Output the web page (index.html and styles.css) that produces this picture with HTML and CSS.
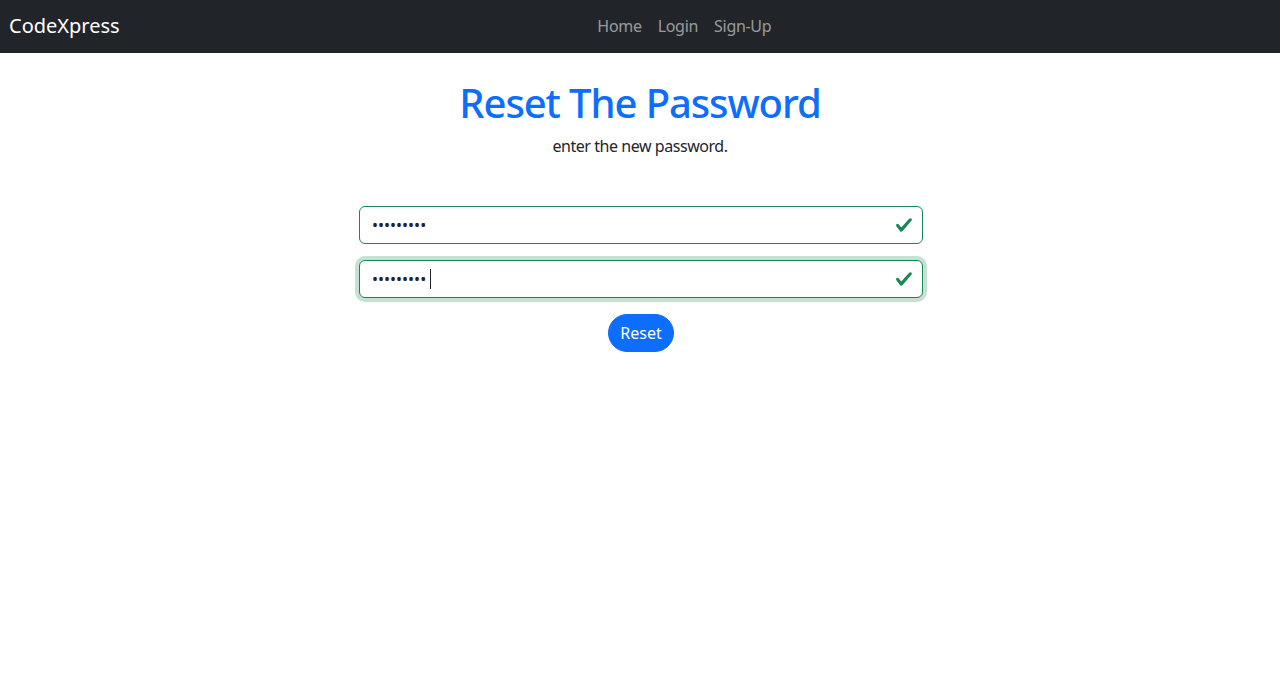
FILE: index.html
```html
<!DOCTYPE html>
<html lang="en">
<head>
<meta charset="utf-8">
<title>CodeXpress ~ Reset The Password</title>
<link rel="stylesheet" href="styles.css">
</head>
<body>
<nav class="navbar">
  <a class="brand" href="#">CodeXpress</a>
  <ul class="nav-links">
    <li><a href="#">Home</a></li>
    <li><a href="#">Login</a></li>
    <li><a href="#">Sign-Up</a></li>
  </ul>
</nav>

<main class="reset">
  <h1>Reset The Password</h1>
  <p class="lead">enter the new password.</p>

  <form class="reset-form" action="" method="post">
    <div class="field">
      <input type="password" name="password" value="123456789" class="is-valid">
      <svg class="valid-icon" viewBox="0 0 8 8" width="18" height="18"><path fill="#198754" d="M2.3 6.73.6 4.53c-.4-1.04.46-1.4 1.1-.8l1.1 1.4 3.4-3.8c.6-.63 1.6-.27 1.2.7l-4 4.6c-.43.5-.8.4-1.1.1z"/></svg>
    </div>
    <div class="field">
      <input type="password" name="cpassword" value="123456789" class="is-valid focused">
      <span class="caret"></span>
      <svg class="valid-icon" viewBox="0 0 8 8" width="18" height="18"><path fill="#198754" d="M2.3 6.73.6 4.53c-.4-1.04.46-1.4 1.1-.8l1.1 1.4 3.4-3.8c.6-.63 1.6-.27 1.2.7l-4 4.6c-.43.5-.8.4-1.1.1z"/></svg>
    </div>
    <button type="submit" class="btn-reset">Reset</button>
  </form>
</main>
</body>
</html>
```

FILE: styles.css
```css
body
        {
        margin:0;
        font-family:"Noto Sans","Open Sans",sans-serif;
        font-size:16px;
        line-height:1.5;
        color:#212529;
        background:#fff;
        }
a
        {
        text-decoration:none;
        }
.navbar
        {
        height:53px;
        background:#212529;
        display:flex;
        align-items:center;
        padding:0 47px 2px 9px;
        box-sizing:border-box;
        }
.brand
        {
        color:#fff;
        font-size:20px;
        line-height:30px;
        margin-right:16px;
        }
.nav-links
        {
        list-style:none;
        margin:0 auto;
        padding:0;
        display:flex;
        }
.nav-links a
        {
        display:block;
        padding:8px;
        color:rgba(255,255,255,.55);
        letter-spacing:-0.3px;
        }
.reset
        {
        text-align:center;
        padding-top:26px;
        }
h1
        {
        margin:0 0 7px 0;
        font-size:40px;
        line-height:48px;
        font-weight:500;
        letter-spacing:-1.1px;
        color:#0d6efd;
        }
.lead
        {
        margin:0 0 48px 0;
        letter-spacing:-0.45px;
        }
.reset-form
        {
        width:564px;
        margin:0 0 0 calc(50% - 281px);
        display:flex;
        flex-direction:column;
        align-items:center;
        gap:16px;
        }
.field
        {
        position:relative;
        width:100%;
        }
.field input
        {
        box-sizing:border-box;
        width:100%;
        height:38px;
        margin:0;
        padding:6px 40px 6px 12px;
        font-family:inherit;
        font-size:16px;
        color:#212529;
        border:1px solid #ced4da;
        border-radius:6px;
        outline:none;
        }
.field input.is-valid
        {
        border-color:#198754;
        }
.field input.focused
        {
        box-shadow:0 0 0 4px rgba(25,135,84,.25);
        }
.valid-icon
        {
        position:absolute;
        right:10px;
        top:10px;
        }
.caret
        {
        position:absolute;
        left:71px;
        top:9px;
        width:1px;
        height:20px;
        background:#212529;
        }
.btn-reset
        {
        height:38px;
        padding:0 11px;
        font-family:inherit;
        font-size:16px;
        color:#fff;
        background:#0d6efd;
        border:1px solid #0d6efd;
        border-radius:20px;
        }
```
